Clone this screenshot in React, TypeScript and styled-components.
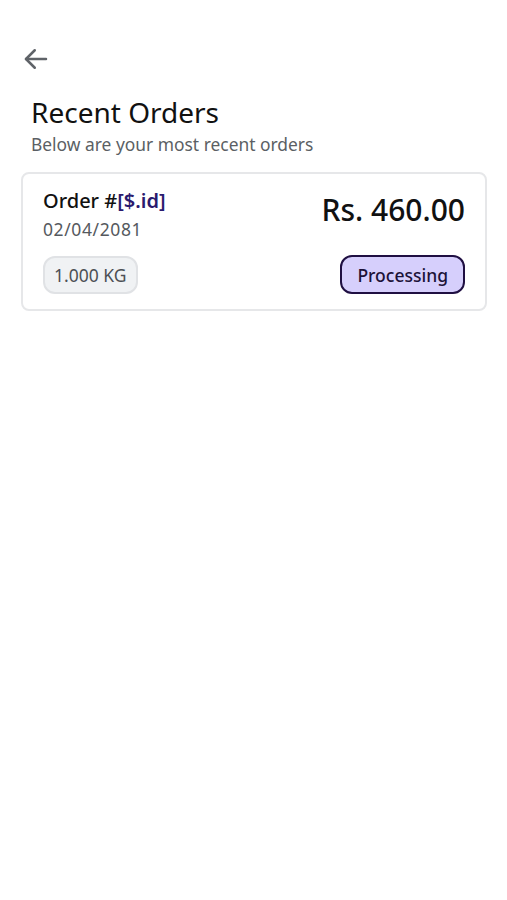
import React from "react";
import styled, {createGlobalStyle} from "styled-components";

const GlobalStyle = createGlobalStyle`
  body {
    margin: 0;
    background: #ffffff;
    font-family: "Noto Sans", "Liberation Sans", sans-serif;
  }
`;

const Page = styled.div`
  padding: 44px 20px 0 21px;
`;

const BackButton = styled.button`
  display: flex;
  align-items: center;
  background: none;
  border: none;
  padding: 0;
  margin: 0;
  color: #5f6368;
  cursor: pointer;
`;

const Title = styled.h1`
  margin: 20px 0 0 10px;
  font-size: 28px;
  font-weight: 400;
  color: #111;
  line-height: 36px;
`;

const Subtitle = styled.p`
  margin: 3px 0 0 10px;
  font-size: 17.4px;
  color: #5b5f64;
  line-height: 22px;
`;

const Card = styled.div`
  margin-top: 17px;
  border: 2px solid #e6e7e9;
  border-radius: 8px;
  padding: 14px 20px 15px 20px;
  display: flex;
  flex-direction: column;
  gap: 15px;
`;

const Row = styled.div<{ $align?: string }>`
  display: flex;
  justify-content: space-between;
  align-items: ${p => p.$align || "center"};
`;

const OrderInfo = styled.div`
  display: flex;
  flex-direction: column;
  gap: 4px;
`;

const OrderId = styled.div`
  font-size: 20px;
  font-weight: 500;
  color: #111;
  line-height: 26px;
`;

const IdToken = styled.span`
  color: #2a1a6e;
  font-weight: 600;
`;

const OrderDate = styled.div`
  font-size: 17.5px;
  color: #55595e;
  line-height: 22px;
  letter-spacing: 0.6px;
`;

const Price = styled.div`
  font-size: 30px;
  font-weight: 500;
  color: #111;
  line-height: 40px;
  margin-top: 2px;
`;

const Chip = styled.span<{ $status?: boolean }>`
  display: inline-flex;
  align-items: center;
  box-sizing: border-box;
  border-radius: 12px;
  font-size: 17.5px;
  background: ${p => (p.$status ? "#d6cffc" : "#f0f2f4")};
  border: ${p => (p.$status ? "2.5px solid #1f0f42" : "2px solid #e0e2e5")};
  color: ${p => (p.$status ? "#1c1238" : "#4c5055")};
  font-weight: ${p => (p.$status ? 500 : 400)};
  height: ${p => (p.$status ? "39px" : "38px")};
  padding: ${p => (p.$status ? "0 15px" : "0 9px")};
`;

export default function App(): JSX.Element {
    return <>
        <GlobalStyle/>
        <Page>
            <BackButton aria-label={"back"}>
                <svg width="30" height="30" viewBox="0 0 24 24" fill="none" stroke="currentColor"
                     strokeWidth="2" strokeLinecap="round" strokeLinejoin="round">
                    <path d="M20 12H4"/>
                    <path d="M11 5l-7 7 7 7"/>
                </svg>
            </BackButton>
            <Title>Recent Orders</Title>
            <Subtitle>Below are your most recent orders</Subtitle>
            <Card>
                <Row $align={"flex-start"}>
                    <OrderInfo>
                        <OrderId>Order #<IdToken>[$.id]</IdToken></OrderId>
                        <OrderDate>02/04/2081</OrderDate>
                    </OrderInfo>
                    <Price>Rs. 460.00</Price>
                </Row>
                <Row>
                    <Chip>1.000 KG</Chip>
                    <Chip $status>Processing</Chip>
                </Row>
            </Card>
        </Page>
    </>
}
